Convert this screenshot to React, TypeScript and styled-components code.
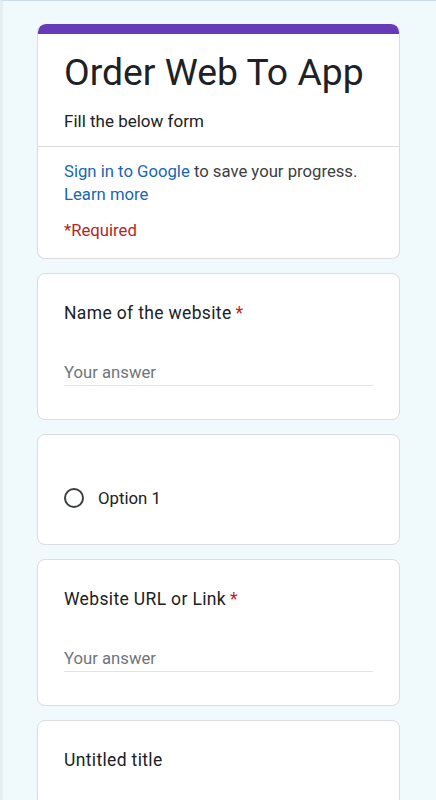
import React from "react";
import styled, { createGlobalStyle } from "styled-components";

const GlobalStyle = createGlobalStyle`
  html, body {
    margin: 0;
    padding: 0;
  }
  body {
    background: #f0f9fc;
    font-family: Roboto, "Liberation Sans", Arial, sans-serif;
    color: #202124;
    border-top: 1px solid #c9dde5;
    border-left: 3px solid #e4eff3;
    min-height: 800px;
    box-sizing: border-box;
  }
`;

const Page = styled.main`
  display: flex;
  flex-direction: column;
  gap: 14px;
  padding: 23px 36px 24px 34px;
`;

const Card = styled.section`
  background: #fff;
  border: 1px solid #dadce0;
  border-radius: 8px;
  overflow: hidden;
`;

const HeaderCard = styled(Card)`
  border-top: none;
`;

const Accent = styled.div`
  height: 10px;
  background: #673ab7;
  border-radius: 8px 8px 0 0;
`;

const HeaderTop = styled.div`
  padding: 14px 26px 13px;
  border-bottom: 1px solid #dadce0;
`;

const Title = styled.h1`
  margin: 0;
  font-size: 37.3px;
  font-weight: 400;
  line-height: 48px;
  color: #202124;
`;

const Description = styled.p`
  margin: 13px 0 0;
  font-size: 17px;
  line-height: 24px;
  color: #202124;
`;

const HeaderBottom = styled.div`
  padding: 13px 26px 15px;
`;

const Notice = styled.p`
  margin: 0;
  font-size: 16.7px;
  line-height: 23px;
  color: #3c4043;
`;

const Link = styled.a`
  color: #1a66b2;
  text-decoration: none;
`;

const RequiredNote = styled.p`
  margin: 13px 0 0;
  font-size: 16.7px;
  line-height: 24px;
  color: #b3261e;
`;

const Question = styled.div`
  padding: 27px 26px 33px;
  display: flex;
  flex-direction: column;
`;

const QuestionTitle = styled.div`
  font-size: 17.5px;
  letter-spacing: 0.35px;
  line-height: 24px;
  min-height: 24px;
  color: #202124;
`;

const Star = styled.span`
  color: #c5221f;
  margin-left: 4px;
`;

const AnswerInput = styled.input`
  margin-top: 35px;
  width: 309px;
  border: none;
  border-bottom: 1px solid #e2e3e5;
  outline: none;
  padding: 0 0 1px;
  font-family: inherit;
  font-size: 16.7px;
  line-height: 24px;
  height: 26px;
  box-sizing: border-box;
  color: #202124;
  background: transparent;

  &::placeholder {
    color: #70757a;
  }
`;

const Options = styled.div`
  display: flex;
  flex-direction: column;
`;

const OptionRow = styled.label`
  display: flex;
  align-items: center;
  gap: 14px;
  height: 24px;
  margin-bottom: 1px;
  font-size: 16.8px;
  line-height: 24px;
  color: #202124;
`;

const Radio = styled.span`
  width: 20px;
  height: 20px;
  box-sizing: border-box;
  border: 2px solid #3c4043;
  border-radius: 50%;
  flex-shrink: 0;
`;

const TextQuestion: React.FC<{ title: string; required?: boolean }> = ({
  title,
  required,
}) => (
  <Card>
    <Question>
      <QuestionTitle>
        {title}
        {required && <Star>*</Star>}
      </QuestionTitle>
      <AnswerInput placeholder="Your answer" />
    </Question>
  </Card>
);

export default function App() {
  return (
    <>
      <GlobalStyle />
      <Page>
        <HeaderCard>
          <Accent />
          <HeaderTop>
            <Title>Order Web To App</Title>
            <Description>Fill the below form</Description>
          </HeaderTop>
          <HeaderBottom>
            <Notice>
              <Link href="#">Sign in to Google</Link> to save your progress.{" "}
              <Link href="#">Learn more</Link>
            </Notice>
            <RequiredNote>*Required</RequiredNote>
          </HeaderBottom>
        </HeaderCard>

        <TextQuestion title="Name of the website" required />

        <Card>
          <Question>
            <QuestionTitle />
            <Options>
              <OptionRow>
                <Radio />
                Option 1
              </OptionRow>
            </Options>
          </Question>
        </Card>

        <TextQuestion title="Website URL or Link" required />

        <Card>
          <Question>
            <QuestionTitle>Untitled title</QuestionTitle>
          </Question>
        </Card>
      </Page>
    </>
  );
}
